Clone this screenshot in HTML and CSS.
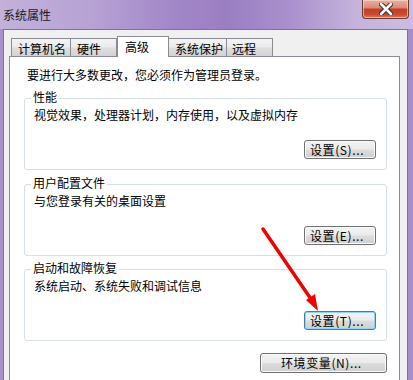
FILE: index.html
```html
<!DOCTYPE html>
<html lang="zh-CN">
<head>
    <meta charset="UTF-8">
    <title>系统属性</title>
    <link rel="stylesheet" href="styles.css">
</head>
<body>
    <div class="window">
        <div class="titlebar">
            <span class="title">系统属性</span>
            <div class="close-button">
                <svg width="14" height="12" viewBox="0 0 14 12">
                    <path d="M2 1 L12 11 M12 1 L2 11" stroke="#3a2a28" stroke-width="4.6" stroke-linecap="round"/>
                    <path d="M2 1 L12 11 M12 1 L2 11" stroke="#ffffff" stroke-width="2.6" stroke-linecap="round"/>
                </svg>
            </div>
        </div>
        <div class="client">
            <div class="tabs">
                <div class="tab tab-computer">计算机名</div>
                <div class="tab tab-hardware">硬件</div>
                <div class="tab tab-advanced selected">高级</div>
                <div class="tab tab-protect">系统保护</div>
                <div class="tab tab-remote">远程</div>
            </div>
            <div class="panel">
                <div class="intro">要进行大多数更改，您必须作为管理员登录。</div>

                <div class="group">
                    <span class="legend">性能</span>
                    <div class="group-text">视觉效果，处理器计划，内存使用，以及虚拟内存</div>
                    <button class="btn">设置(S)...</button>
                </div>

                <div class="group group-profile">
                    <span class="legend">用户配置文件</span>
                    <div class="group-text">与您登录有关的桌面设置</div>
                    <button class="btn">设置(E)...</button>
                </div>

                <div class="group group-startup">
                    <span class="legend">启动和故障恢复</span>
                    <div class="group-text">系统启动、系统失败和调试信息</div>
                    <button class="btn focused">设置(T)...</button>
                </div>

                <div class="footer">
                    <button class="btn btn-wide">环境变量(N)...</button>
                </div>
            </div>
        </div>
        <svg class="arrow" width="413" height="380" viewBox="0 0 413 380">
            <path d="M263 229 L313 302" stroke="#f20000" stroke-width="3.5" stroke-linecap="round"/>
            <polygon points="318,311 306,300 315,294" fill="#f20000"/>
        </svg>
    </div>
</body>
</html>
```

FILE: styles.css
```css
/* Windows 7 style dialog */
body {
    margin: 0;
    background-color: #fff;
    font-family: "Noto Sans CJK SC", "Noto Sans", sans-serif;
    font-size: 12px;
    color: #000;
}

.window {
    position: relative;
    width: 413px;
    height: 380px;
    overflow: hidden;
    background: linear-gradient(90deg, #a891cb 0%, #a58ec9 100%);
}

.titlebar {
    display: flex;
    justify-content: space-between;
    align-items: flex-start;
    height: 29px;
    background: linear-gradient(90deg, #c3b1da 0%, #b7a2d4 22%, #a287c7 42%, #9a7ec2 55%, #a990cc 70%, #c4b3dc 86%, #cbbde1 100%);
}

.title {
    padding: 8px 0 0 3px;
    line-height: 14px;
    color: #1a1a1a;
}

.close-button {
    display: flex;
    justify-content: center;
    align-items: center;
    width: 47px;
    height: 19px;
    margin-right: 4px;
    box-sizing: border-box;
    border: 1px solid #6b3a33;
    border-top: none;
    border-radius: 0 0 4px 4px;
    background: linear-gradient(180deg, #eab0a2 0%, #de8a77 42%, #c43f27 52%, #c9492f 80%, #e07b5c 100%);
    box-shadow: inset 0 0 0 1px rgba(255, 220, 210, 0.6);
}

.client {
    box-sizing: border-box;
    width: 405px;
    height: 351px;
    margin-left: 3px;
    padding: 6px 0 0 5px;
    border: 1px solid #7c7491;
    border-bottom: none;
    background-color: #f0f0f0;
}

.tabs {
    display: flex;
    align-items: flex-end;
    height: 20px;
    padding-left: 2px;
}

.tab {
    box-sizing: border-box;
    height: 18px;
    padding: 2px 0 0 6px;
    line-height: 15px;
    border: 1px solid #898c95;
    border-bottom: none;
    border-left: none;
    background: linear-gradient(180deg, #f4f4f4 0%, #ebebeb 45%, #dedede 55%, #d3d3d3 100%);
}

.tab-computer {
    width: 60px;
    border-left: 1px solid #898c95;
}

.tab-hardware {
    width: 46px;
}

.tab-protect {
    width: 58px;
}

.tab-remote {
    width: 46px;
    padding-left: 5px;
}

.tab.selected {
    position: relative;
    z-index: 1;
    width: 52px;
    height: 21px;
    margin-bottom: -1px;
    padding: 2px 0 0 7px;
    border-left: 1px solid #898c95;
    background: #fff;
}

.tab-advanced + .tab {
    border-left: none;
}

.panel {
    box-sizing: border-box;
    width: 391px;
    height: 330px;
    padding: 11px 12px 0 14px;
    border: 1px solid #898c95;
    border-bottom: none;
    background-color: #fff;
}

.intro {
    padding-left: 3px;
    line-height: 14px;
}

.group {
    position: relative;
    display: flex;
    flex-direction: column;
    justify-content: space-between;
    align-items: flex-end;
    box-sizing: border-box;
    height: 72px;
    margin-top: 16px;
    padding: 9px 10px 10px 9px;
    border: 1px solid #d5dfe5;
    border-radius: 3px;
}

.group-profile {
    margin-top: 14px;
}

.group-startup {
    margin-top: 13px;
}

.legend {
    position: absolute;
    top: -9px;
    left: 6px;
    padding: 0 2px;
    line-height: 14px;
    background-color: #fff;
}

.group-text {
    align-self: stretch;
    line-height: 14px;
}

.btn {
    box-sizing: border-box;
    width: 72px;
    height: 19px;
    padding: 0 0 0 5px;
    font-family: inherit;
    font-size: 12px;
    line-height: 16px;
    letter-spacing: 0.6px;
    color: #000;
    text-align: left;
    border: 1px solid #707070;
    border-radius: 3px;
    background: linear-gradient(180deg, #f3f3f3 0%, #ebebeb 48%, #dddddd 52%, #cfcfcf 100%);
    box-shadow: inset 0 0 0 1px #fbfbfb;
}

.btn.focused {
    border-color: #3c7fb1;
    box-shadow: inset 0 0 0 1px #8fd3f7;
}

.footer {
    display: flex;
    justify-content: flex-end;
    margin-top: 12px;
}

.btn-wide {
    width: 127px;
    height: 20px;
    padding-left: 20px;
}

.arrow {
    position: absolute;
    top: 0;
    left: 0;
    pointer-events: none;
}
```
